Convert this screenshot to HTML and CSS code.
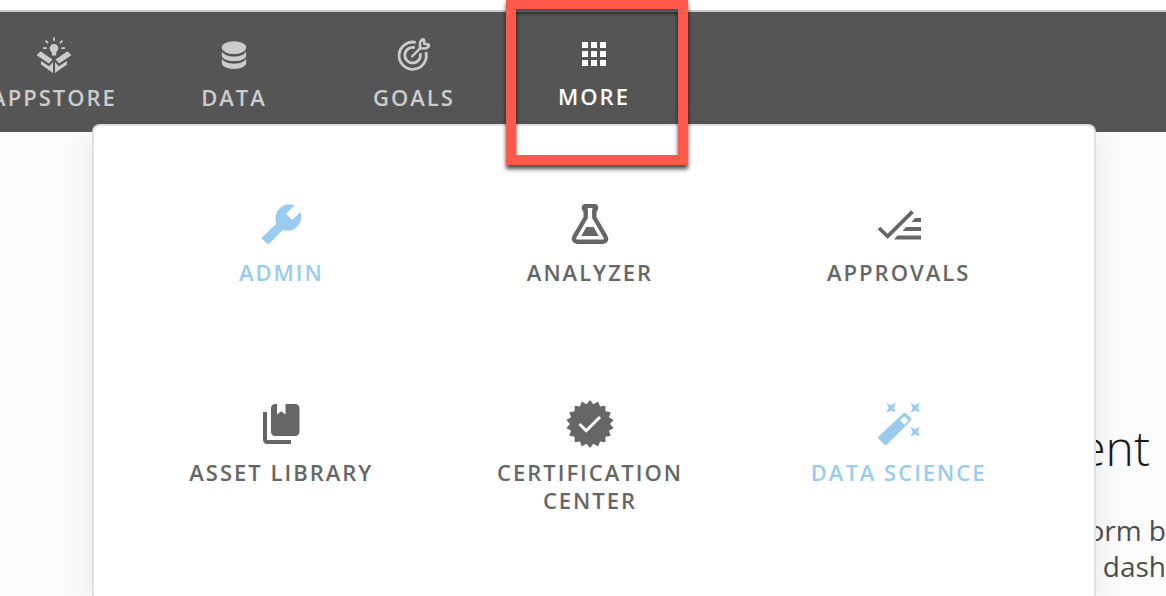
FILE: index.html
```html
<!DOCTYPE html>
<html lang="en">
<head>
<meta charset="utf-8">
<meta name="viewport" content="width=device-width, initial-scale=1">
<title>More</title>
<link rel="stylesheet" href="styles.css">
</head>
<body>
<header class="topbar">
  <nav class="tabs">
    <a class="tab" href="#">
      <svg class="tab-icon" viewBox="0 0 40 40" fill="currentColor" aria-hidden="true">
        <path d="M20 9a4.300 4.300 0 0 0-4.300 4.300c0 2 1.300 3 2.100 4.200V20.500h4.400V17.500c.8-1.200 2.100-2.200 2.100-4.200A4.300 4.300 0 0 0 20 9z"/>
        <path d="M6.500 16.200l12 8.300-3.600 3.900-12.300-8.200zM33.500 16.200l-12 8.300 3.600 3.900 12.300-8.200zM7 26l8.200 5.200 3.800-4.200v11L7 29.600zM33 26l-8.200 5.200-3.800-4.200v11l12-8.400z"/>
        <path d="M20 2.500v3.200M11.600 5.600l2.400 2.600M28.400 5.600L26 8.200M9 13.200h3.800M27.200 13.200H31" stroke="currentColor" stroke-width="1.800"/>
      </svg>
      <span class="tab-label">APPSTORE</span>
    </a>
    <a class="tab" href="#">
      <svg class="tab-icon" viewBox="0 0 40 40" fill="currentColor" aria-hidden="true">
        <ellipse cx="20" cy="12.600" rx="12.200" ry="6.400"/>
        <path d="M7.800 16.200c1.500 3.300 6.400 5.300 12.200 5.300s10.700-2 12.200-5.300v4.200c0 3.300-5.400 5.600-12.200 5.600s-12.200-2.300-12.200-5.600z"/>
        <path d="M7.800 23.500c1.500 3.300 6.400 5.200 12.200 5.200s10.700-1.900 12.200-5.200v4.600c0 3.300-5.400 5.900-12.200 5.900s-12.200-2.600-12.200-5.900z"/>
      </svg>
      <span class="tab-label">DATA</span>
    </a>
    <a class="tab" href="#">
      <svg class="tab-icon" viewBox="0 0 40 40" fill="none" stroke="currentColor" stroke-width="2.800" aria-hidden="true">
        <path d="M21.700 7.400A13.600 13.600 0 1 0 31.800 17"/>
        <path d="M20.800 12.700A7.800 7.800 0 1 0 26.200 18.300"/>
        <path d="M17.500 22L26.500 12.800" stroke-width="2.400"/>
        <path d="M26 13.300V8.500C26 6 28.600 3.600 29.800 4.700L30.400 8.800 34.500 9.500C35.800 10.500 33.500 13.500 31 13.500z" stroke-width="2.600" stroke-linejoin="round"/>
      </svg>
      <span class="tab-label">GOALS</span>
    </a>
    <a class="tab tab-active" href="#" aria-current="page">
      <svg class="tab-icon" viewBox="0 0 40 40" fill="currentColor" aria-hidden="true">
        <path d="M8 8h6v6H8zM17 8h6v6h-6zM26 8h6v6h-6zM8 17h6v6H8zM17 17h6v6h-6zM26 17h6v6h-6zM8 26h6v6H8zM17 26h6v6h-6zM26 26h6v6h-6z"/>
      </svg>
      <span class="tab-label">MORE</span>
    </a>
  </nav>
</header>

<main class="page">
  <h1 class="page-title">ent</h1>
  <p class="page-text">orm b<br>dash</p>
</main>

<section class="menu" aria-label="More">
  <a class="item item-blue" href="#">
    <svg class="item-icon" viewBox="0 0 48 48" fill="currentColor" aria-hidden="true">
      <path d="M5 37.600L19.300 23.700C17.700 18.900 18.300 13 22.200 8.700 26.200 4.300 32 3 37.600 5.200L29 13.700l6 6.300 8.600-8.100c1.300 5.800.2 11.300-3.700 15-4 3.800-9.600 4.600-14.300 3.100L12.800 43.200c-.9.900-2 .9-2.900 0L5 38.900c-.4-.4-.4-.9 0-1.300z"/>
    </svg>
    <span class="item-label">ADMIN</span>
  </a>
  <a class="item" href="#">
    <svg class="item-icon" viewBox="0 0 48 48" fill="none" aria-hidden="true">
      <path d="M19.700 10v7.500L8.600 36.500C7 39.500 8.500 41.800 11.200 41.800h25.600c2.700 0 4.200-2.300 2.600-5.300L28.300 17.500V10" stroke="currentColor" stroke-width="4.400"/>
      <path d="M19 4h10c2 0 3.200 1.300 3.200 3.800 0 2.400-1.200 4.200-3.200 4.200h-2.600V8h-4.800v4H19c-2 0-3.200-1.800-3.200-4.200C15.800 5.300 17 4 19 4zM20.300 27h7.400l5 9H15.300z" fill="currentColor"/>
    </svg>
    <span class="item-label">ANALYZER</span>
  </a>
  <a class="item" href="#">
    <svg class="item-icon" viewBox="0 0 48 48" aria-hidden="true">
      <path d="M4 28l8.600 8.300L37.500 11.600" fill="none" stroke="currentColor" stroke-width="3.800"/>
      <path d="M40 18H46v4H36.500zM31 27H46v4H27.500zM22.500 35.500H46v4H19z" fill="currentColor"/>
    </svg>
    <span class="item-label">APPROVALS</span>
  </a>
  <a class="item" href="#">
    <svg class="item-icon" viewBox="0 0 48 48" fill="currentColor" aria-hidden="true">
      <path d="M6 12h4v28h24v4H10c-2.200 0-4-1.800-4-4z"/>
      <path d="M18 4h2v10.500l4.300-3.300 4.200 3.300V4H38.500c2.200 0 4 1.800 4 4v24c0 2.200-1.800 4-4 4H18c-2.200 0-4-1.800-4-4V8c0-2.200 1.800-4 4-4z"/>
    </svg>
    <span class="item-label">ASSET LIBRARY</span>
  </a>
  <a class="item" href="#">
    <svg class="item-icon" viewBox="0 0 48 48" aria-hidden="true">
      <path fill="currentColor" d="M24 0l3.500 4.200L32.200 1.500l1.800 5.100 5.400-.9V11.200l5.400 1L42.900 17.300 47.600 20 44 24l3.600 4-4.700 2.700 1.900 5.100-5.400 1v5.500L34 41.400l-1.800 5.100-4.700-2.700L24 48l-3.500-4.200-4.700 2.700L14 41.400l-5.400.9V36.800l-5.400-1 1.900-5.100L.4 28 4 24 .4 20l4.700-2.700-1.900-5.100 5.400-1V5.700l5.400.9 1.800-5.100 4.700 2.700z"/>
      <path d="M13.500 24l6.700 6.700L34 17" fill="none" stroke="#fff" stroke-width="3"/>
    </svg>
    <span class="item-label">CERTIFICATION CENTER</span>
  </a>
  <a class="item item-blue" href="#">
    <svg class="item-icon" viewBox="0 0 48 48" fill="currentColor" aria-hidden="true">
      <path fill-rule="evenodd" d="M28.200 13.600c1-1 2.300-1 3.200 0l4.200 4.200c.9.900.9 2.100 0 3.100L12.200 44.300c-.9.900-2.200.9-3.100 0l-5.300-5.200c-.9-.9-.9-2 0-2.900zM29.400 16.200l-4.300 4.400 4.100 4.200 4.400-4.400z"/>
      <path id="spark" d="M11.500 3l4.800 2.200L21 3l-2.200 4.900L21 12.600l-4.700-2.100-4.800 2.100L13.700 7.900z"/>
      <use href="#spark" x="24"/>
      <use href="#spark" x="24" y="24"/>
    </svg>
    <span class="item-label">DATA SCIENCE</span>
  </a>
</section>
<div class="highlight" aria-hidden="true"></div>
</body>
</html>
```
FILE: styles.css
```css
* {
  box-sizing: border-box;
}

body {
  margin: 0;
  min-height: 100vh;
  position: relative;
  overflow: hidden;
  padding-top: 10px;
  background: linear-gradient(#fff 10px, #fbfbfb 10px);
  font-family: "Open Sans", "Noto Sans", sans-serif;
}

a {
  color: inherit;
  text-decoration: none;
}

.topbar {
  border-top: 2px solid #ccc;
  background: #555;
  overflow: hidden;
}

.tabs {
  display: flex;
  margin-left: -36px;
}

.tab {
  flex: 0 0 180px;
  height: 120px;
  padding-top: 23px;
  display: flex;
  flex-direction: column;
  align-items: center;
  color: #ccc;
}

.tab-active {
  padding-top: 22px;
  color: #fff;
}

.tab-icon {
  width: 40px;
  height: 40px;
}

.tab-label,
.item-label {
  font-size: 22px;
  font-weight: 600;
  line-height: 28px;
  letter-spacing: 2px;
}

.tab-label {
  margin-top: 8px;
}

.page {
  padding: 283px 16px 0 0;
  text-align: right;
}

.page-title {
  margin: 0;
  color: #1a1a1a;
  font-size: 48px;
  font-weight: 300;
  line-height: 66px;
}

.page-text {
  margin: 31px -16px 0 0;
  color: #4d4d4d;
  font-size: 28px;
  line-height: 36px;
}

.menu {
  position: absolute;
  inset: 124px 70px 0 92px;
  border: 2px solid #e0e0e0;
  border-bottom: 0;
  border-radius: 8px 8px 0 0;
  background: #fff;
  box-shadow: 0 8px 30px rgba(0, 0, 0, 0.08);
  padding: 74px 41px 0 33px;
  display: grid;
  grid-template-columns: repeat(3, 1fr);
  grid-auto-rows: 200px;
}

.item {
  display: flex;
  flex-direction: column;
  align-items: center;
  padding: 0 52px;
  color: #666;
  text-align: center;
}

.item-blue {
  color: #99ccee;
}

.item-icon {
  width: 48px;
  height: 48px;
}

.item-label {
  margin-top: 10px;
}

.highlight {
  position: absolute;
  top: -1px;
  left: 506px;
  width: 182px;
  height: 166px;
  border: 10px solid #ff594c;
  filter: drop-shadow(0 4px 2px rgba(0, 0, 0, 0.7));
}
```
